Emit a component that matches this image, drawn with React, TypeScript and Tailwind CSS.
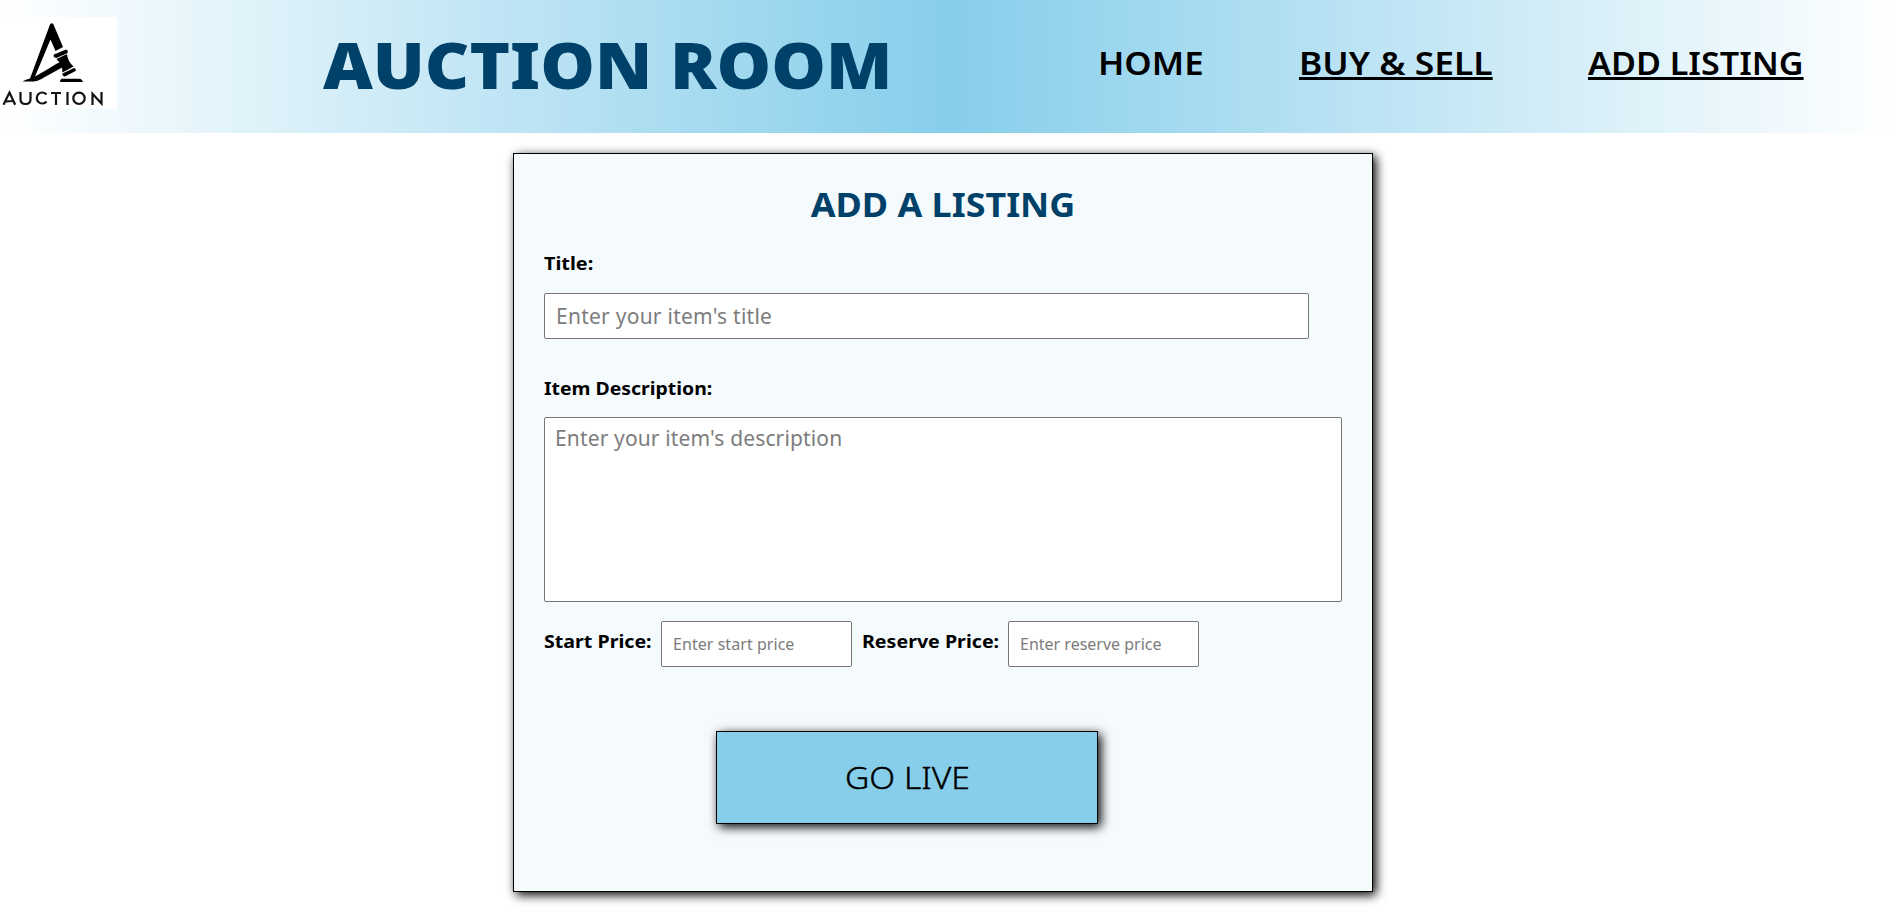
import React from "react";

const inputBase =
  "block shrink-0 rounded-[2px] border border-[#767676] bg-white font-normal text-black outline-none placeholder:text-[#7c7c7c] placeholder:opacity-100";

function Logo() {
  return (
    <svg className="block h-[92px] w-[117px] shrink-0 bg-white" viewBox="0 0 117 92" aria-label="Auction">
      <path d="M50 7.500 Q51.800 5 53.500 7.500 L63 30 L55.500 34 L50.500 22.500 L35 59.500 Q45 54 57 46.500 L61 45 L63 50 L44 60.500 Q38 64.500 33 64.500 L22.500 64.500 Q25.500 62.500 30 61.500 Z" />
      <path d="M54 37.500 L66 32.500 Q68.500 33.500 67.500 36 L56.500 41 Q52.500 40.500 54 37.500 Z" />
      <path d="M56.500 42 L67 37 Q67.500 44 73.500 49.500 L62.500 55.500 Q62.500 48 56.500 42 Z" />
      <path d="M62.500 56.500 L74 51 Q76.500 52 75.500 54 L65 59.500 Q62 59 62.500 56.500 Z" />
      <path d="M61.500 61.800 H80 Q82 62 83 65 H60 Q60 62.500 61.500 61.800 Z" />
      <g fill="none" stroke="#111" strokeWidth="2.200">
        <path d="M3.500 87.800 L9.500 75.500 L15.200 87.800 M6 84.500 L12.500 84" />
        <path d="M20.500 75 V82 Q20.500 87 25.500 87 Q30.500 87 30.500 82 V75" />
        <path d="M46.500 77.500 A5.500 5.500 0 1 0 46.500 84.500" />
        <path d="M51 76 H61 M56 76 V88" />
        <path d="M67.500 75 V88" />
        <circle cx="79" cy="81.300" r="5.700" />
        <path d="M92.500 88 V76.800 L101.500 86.500 V75" />
      </g>
    </svg>
  );
}

function Header() {
  return (
    <header className="flex h-[133px] w-full items-start bg-[linear-gradient(to_right,#ffffff,#87ceeb,#ffffff)]">
      <div className="pt-[17px]">
        <Logo />
      </div>
      <h1 className="ml-[206px] w-[565px] pt-[17px] text-[64px] leading-[96px] font-black whitespace-nowrap text-[#00416a]">
        <span className="inline-block origin-left scale-x-[1.073]">AUCTION ROOM</span>
      </h1>
      <nav className="ml-[210px] flex pt-[39px] text-[32px] leading-[48px] font-semibold whitespace-nowrap text-black">
        <div className="w-[201px]">
          <a className="inline-block origin-left scale-x-[1.09]">HOME</a>
        </div>
        <div className="w-[289px]">
          <a className="inline-block origin-left scale-x-[1.106] underline decoration-[3px] underline-offset-[2px]">
            BUY &amp; SELL
          </a>
        </div>
        <a className="inline-block origin-left scale-x-[1.066] underline decoration-[3px] underline-offset-[2px]">
          ADD LISTING
        </a>
      </nav>
    </header>
  );
}

export default function App() {
  return (
    <div className="h-[914px] w-full overflow-hidden bg-white font-['Noto_Sans',sans-serif]">
      <Header />
      <form className="mt-[20px] ml-[513px] flex h-[739px] w-[860px] flex-col border border-black bg-[#f5fafd] px-[30px] shadow-[3px_3px_10px_#000]">
        <h2 className="mt-[25px] origin-center scale-x-[1.056] text-center text-[34px] leading-[50px] font-bold whitespace-nowrap text-[#00416a]">
          ADD A LISTING
        </h2>
        <label className="mt-[21px] h-[27px] w-[60px] origin-left scale-x-[1.1] text-[18px] leading-[27px] font-bold">
          Title:
        </label>
        <input
          className={`${inputBase} mt-[16px] h-[46px] w-[765px] px-[11px] text-[21px] tracking-[0.25px]`}
          placeholder="Enter your item's title"
        />
        <label className="mt-[36px] h-[27px] w-[200px] origin-left scale-x-[1.078] text-[18px] leading-[27px] font-bold">
          Item Description:
        </label>
        <textarea
          className={`${inputBase} mt-[15px] h-[185px] w-[798px] resize-none px-[10px] py-[6px] text-[21px] leading-[28px] tracking-[0.14px]`}
          placeholder="Enter your item's description"
        />
        <div className="mt-[19px] flex h-[46px] items-start whitespace-nowrap">
          <label className="mt-[7px] w-[117px] origin-left scale-x-[1.09] text-[18px] leading-[27px] font-bold">
            Start Price:
          </label>
          <input
            className={`${inputBase} h-[46px] w-[191px] px-[11px] text-[16px] tracking-[0.05px]`}
            placeholder="Enter start price"
          />
          <label className="mt-[7px] ml-[10px] w-[146px] origin-left scale-x-[1.09] text-[18px] leading-[27px] font-bold">
            Reserve Price:
          </label>
          <input
            className={`${inputBase} h-[46px] w-[191px] px-[11px] text-[16px]`}
            placeholder="Enter reserve price"
          />
        </div>
        <button
          type="button"
          className="mt-[64px] ml-[172px] h-[93px] w-[382px] border border-black bg-[#87ceeb] pb-[2px] text-[32px] font-light text-black shadow-[3px_3px_10px_#000]"
        >
          <span className="inline-block scale-x-[1.05] [-webkit-text-stroke:0.4px_#000]">GO LIVE</span>
        </button>
      </form>
    </div>
  );
}
